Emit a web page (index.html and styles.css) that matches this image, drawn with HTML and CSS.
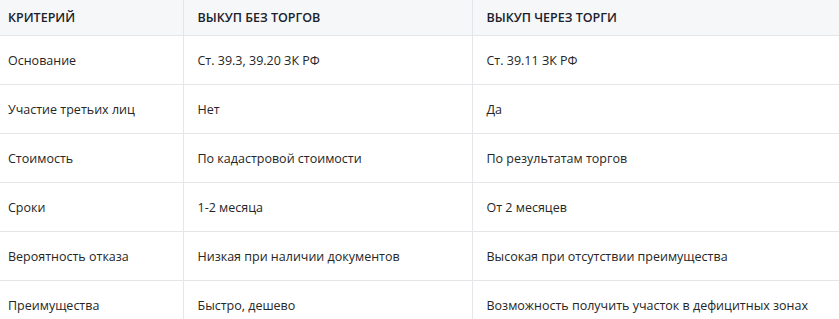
FILE: index.html
```html
<!DOCTYPE html>
<html lang="ru">
<head>
<meta charset="utf-8">
<link rel="stylesheet" href="styles.css">
</head>
<body>
<table class="cmp">
  <colgroup><col class="c1"><col class="c2"><col class="c3"></colgroup>
  <thead>
    <tr><th>Критерий</th><th>Выкуп без торгов</th><th>Выкуп через торги</th></tr>
  </thead>
  <tbody>
    <tr><td>Основание</td><td>Ст. 39.3, 39.20 ЗК РФ</td><td>Ст. 39.11 ЗК РФ</td></tr>
    <tr><td>Участие третьих лиц</td><td>Нет</td><td>Да</td></tr>
    <tr><td>Стоимость</td><td>По кадастровой стоимости</td><td>По результатам торгов</td></tr>
    <tr><td>Сроки</td><td>1-2 месяца</td><td>От 2 месяцев</td></tr>
    <tr><td>Вероятность отказа</td><td>Низкая при наличии документов</td><td>Высокая при отсутствии преимущества</td></tr>
    <tr><td>Преимущества</td><td>Быстро, дешево</td><td>Возможность получить участок в дефицитных зонах</td></tr>
  </tbody>
</table>
</body>
</html>
```
FILE: styles.css
```css
html, body { margin: 0; padding: 0; background: #fff; }
body { font-family: "Open Sans", "Noto Sans", sans-serif; font-size: 12.5px; color: #262626; }
.cmp { border-collapse: collapse; width: 860px; table-layout: fixed; }
.c1 { width: 183px; }
.c2 { width: 289px; }
.cmp th, .cmp td { text-align: left; padding: 0 14px; border: 1px solid #e4e6ea; }
.cmp tr > :first-child { padding-left: 8px; border-left: none; }
.cmp thead tr { background: #f6f7f9; }
.cmp th { height: 35px; font-weight: 600; text-transform: uppercase; color: #1a212b; border-top: none; }
.cmp td { height: 48px; }
```
